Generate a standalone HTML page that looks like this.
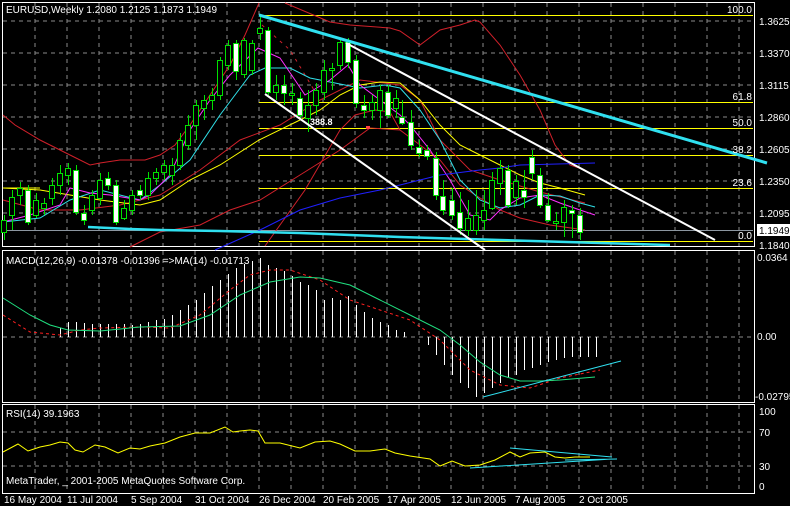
<!DOCTYPE html>
<html><head><meta charset="utf-8"><style>
html,body{margin:0;padding:0;background:#000;width:790px;height:506px;overflow:hidden}
svg{display:block}
text{font-family:"Liberation Sans",sans-serif;font-size:10px;fill:#fff}
</style></head><body>
<svg width="790" height="506" viewBox="0 0 790 506" xmlns="http://www.w3.org/2000/svg">
<rect width="790" height="506" fill="#000"/>
<g stroke="#8a8a8a" stroke-dasharray="4,4" stroke-width="1" shape-rendering="crispEdges">
<path d="M35 3V246M67 3V246M99 3V246M131 3V246M163 3V246M195 3V246M227 3V246M259 3V246M291 3V246M323 3V246M355 3V246M387 3V246M419 3V246M451 3V246M483 3V246M515 3V246M547 3V246M579 3V246M611 3V246M643 3V246M675 3V246M707 3V246M739 3V246"/>
<path d="M3 21H753M3 53H753M3 85H753M3 117H753M3 149H753M3 181H753M3 213H753"/>
<path d="M35 251V401M67 251V401M99 251V401M131 251V401M163 251V401M195 251V401M227 251V401M259 251V401M291 251V401M323 251V401M355 251V401M387 251V401M419 251V401M451 251V401M483 251V401M515 251V401M547 251V401M579 251V401M611 251V401M643 251V401M675 251V401M707 251V401M739 251V401"/>
<path d="M3 337H753"/>
<path d="M35 405V492M67 405V492M99 405V492M131 405V492M163 405V492M195 405V492M227 405V492M259 405V492M291 405V492M323 405V492M355 405V492M387 405V492M419 405V492M451 405V492M483 405V492M515 405V492M547 405V492M579 405V492M611 405V492M643 405V492M675 405V492M707 405V492M739 405V492"/>
<path d="M3 432H753M3 466H753"/>
</g>
<g fill="none" stroke="#fff" stroke-width="1" shape-rendering="crispEdges">
<rect x="2.5" y="2.5" width="752" height="244"/>
<rect x="2.5" y="250.5" width="752" height="152"/>
<rect x="2.5" y="404.5" width="752" height="89"/>
</g>
<path d="M3 230.5H753" stroke="#8c96a0" stroke-width="1"/>
<g stroke="#ffff00" stroke-width="1" shape-rendering="crispEdges">
<path d="M259 15.5H753M259 102.5H753M259 128.5H753M259 155.5H753M259 188.5H753M259 241.5H753"/>
<path d="M3 188H40"/>
</g>
<g fill="none" stroke-width="1">
<polyline stroke="#d0202a" points="3,115 15,125 40,140 70,155 90,165 100,163 120,160 145,160 160,155 175,145 190,125 210,95 230,65 245,35 259,3"/>
<polyline stroke="#d0202a" points="285,3 330,22 350,25 390,28 400,31 420,45 440,30 460,25 475,20 480,22 500,45 520,75 540,110 555,145 570,165 585,170"/>
<polyline stroke="#d0202a" points="130,247 160,232 200,225 230,210 260,200 300,175 340,150 370,128 400,130 420,145 440,160 460,185 480,198 500,210 520,218 550,225 585,230"/>
<polyline stroke="#d0202a" points="265,246 305,190 340,130 355,115 375,110 390,112 400,130"/>
<polyline stroke="#d0202a" points="3,200 40,210 80,210 120,205 160,195 200,170 240,140 280,125 320,100 360,80 400,85 420,100 440,140 470,170 500,180 540,192 585,203"/>
<polyline stroke="#d0202a" stroke-dasharray="3,5" points="262,25 290,50 320,100"/>
<polyline stroke="#ffff00" points="3,188 40,190 70,195 100,200 140,205 160,200 190,180 220,165 259,140 300,120 320,110 340,95 360,85 380,82 400,83 420,100 440,125 460,145 480,155 500,165 520,175 540,183 560,188 585,195"/>
<polyline stroke="#30e0e8" points="3,222 40,218 70,200 100,190 140,200 160,185 190,160 220,115 250,75 265,68 290,68 310,78 330,82 360,88 385,85 400,88 420,110 440,140 460,180 480,200 500,208 520,205 540,195 560,196 580,203 595,207"/>
<polyline stroke="#ff30ff" points="3,222 30,215 60,205 70,188 90,193 110,195 140,200 150,195 170,175 190,130 210,100 230,75 258,48 280,58 295,80 305,95 330,80 348,65 360,85 380,100 400,115 410,125 430,150 450,180 470,215 490,220 500,210 520,198 540,195 560,203 580,210 595,215"/>
<polyline stroke="#2020ff" points="215,250 260,230 300,210 340,198 380,190 400,185 440,175 480,170 500,168 520,165 595,163"/>
</g>
<g stroke="#00e000" stroke-width="1" shape-rendering="crispEdges" transform="translate(0.5,0)">
<path d="M4 215V240M12 190V230M20 182V205M28 185V225M36 193V218M44 198V215M52 178V205M60 165V195M68 163V185M76 165V215M84 205V225M92 190V215M100 173V205M108 172V190M116 180V225M124 200V220M132 190V215M140 185V200M148 172V200M156 168V185M164 160V180M172 158V185M180 133V170M188 115V150M196 100V140M204 95V120M212 88V110M220 57V100M228 40V70M236 40V80M244 38V78M252 40V75M260 15V40M268 27V95M276 75V100M284 75V105M292 83V105M300 92V120M308 90V132M316 83V115M324 60V100M332 63V90M340 38V70M348 38V68M356 55V108M364 95V118M372 95V120M380 85V128M388 85V118M396 90V118M402 100V125M411 110V150M419 140V157M427 145V160M436 152V200M443 180V215M452 188V220M460 192V235M468 200V236M476 190V235M484 190V230M492 172V210M500 160V195M508 165V208M516 175V205M524 170V208M532 150V180M540 168V208M548 193V222M556 212V230M564 200V237M572 205V238M580 208V240"/>
</g>
<g stroke="#00e000" stroke-width="1" shape-rendering="crispEdges">
<g fill="#000">
<rect x="1.5" y="220.5" width="5" height="12"/><rect x="9.5" y="197.5" width="5" height="18"/><rect x="17.5" y="188.5" width="5" height="7"/><rect x="33.5" y="200.5" width="5" height="15"/><rect x="41.5" y="203.5" width="5" height="5"/><rect x="49.5" y="185.5" width="5" height="13"/><rect x="57.5" y="173.5" width="5" height="12"/><rect x="65.5" y="168.5" width="5" height="7"/><rect x="89.5" y="195.5" width="5" height="15"/><rect x="97.5" y="180.5" width="5" height="18"/><rect x="121.5" y="208.5" width="5" height="10"/><rect x="129.5" y="195.5" width="5" height="15"/><rect x="145.5" y="178.5" width="5" height="17"/><rect x="153.5" y="172.5" width="5" height="6"/><rect x="161.5" y="165.5" width="5" height="7"/><rect x="169.5" y="165.5" width="5" height="10"/><rect x="177.5" y="140.5" width="5" height="25"/><rect x="185.5" y="125.5" width="5" height="20"/><rect x="193.5" y="105.5" width="5" height="20"/><rect x="201.5" y="100.5" width="5" height="8"/><rect x="209.5" y="95.5" width="5" height="5"/><rect x="217.5" y="60.5" width="5" height="35"/><rect x="225.5" y="45.5" width="5" height="20"/><rect x="241.5" y="40.5" width="5" height="34"/><rect x="249.5" y="43.5" width="5" height="27"/><rect x="257.5" y="28.5" width="5" height="5"/><rect x="273.5" y="85.5" width="5" height="7"/><rect x="289.5" y="93.5" width="5" height="2"/><rect x="305.5" y="105.5" width="5" height="13"/><rect x="313.5" y="90.5" width="5" height="15"/><rect x="321.5" y="70.5" width="5" height="22"/><rect x="329.5" y="68.5" width="5" height="2"/><rect x="337.5" y="42.5" width="5" height="23"/><rect x="369.5" y="102.5" width="5" height="8"/><rect x="377.5" y="90.5" width="5" height="20"/><rect x="393.5" y="98.5" width="5" height="10"/><rect x="465.5" y="218.5" width="5" height="12"/><rect x="473.5" y="215.5" width="5" height="15"/><rect x="481.5" y="210.5" width="5" height="10"/><rect x="489.5" y="180.5" width="5" height="28"/><rect x="497.5" y="168.5" width="5" height="15"/><rect x="513.5" y="181.5" width="5" height="16"/><rect x="553.5" y="221.5" width="5" height="2"/><rect x="561.5" y="207.5" width="5" height="15"/>
</g>
<g fill="#fff">
<rect x="25.5" y="190.5" width="5" height="32"/><rect x="73.5" y="170.5" width="5" height="42"/><rect x="81.5" y="213.5" width="5" height="7"/><rect x="105.5" y="178.5" width="5" height="7"/><rect x="113.5" y="185.5" width="5" height="37"/><rect x="137.5" y="190.5" width="5" height="5"/><rect x="233.5" y="43.5" width="5" height="28"/><rect x="265.5" y="30.5" width="5" height="62"/><rect x="281.5" y="85.5" width="5" height="8"/><rect x="297.5" y="98.5" width="5" height="17"/><rect x="345.5" y="42.5" width="5" height="20"/><rect x="353.5" y="60.5" width="5" height="43"/><rect x="361.5" y="105.5" width="5" height="5"/><rect x="385.5" y="92.5" width="5" height="23"/><rect x="399.5" y="117.5" width="5" height="6"/><rect x="408.5" y="122.5" width="5" height="23"/><rect x="416.5" y="147.5" width="5" height="6"/><rect x="424.5" y="150.5" width="5" height="6"/><rect x="433.5" y="158.5" width="5" height="37"/><rect x="440.5" y="196.5" width="5" height="14"/><rect x="449.5" y="200.5" width="5" height="15"/><rect x="457.5" y="212.5" width="5" height="16"/><rect x="505.5" y="170.5" width="5" height="35"/><rect x="521.5" y="190.5" width="5" height="7"/><rect x="529.5" y="157.5" width="5" height="16"/><rect x="537.5" y="175.5" width="5" height="30"/><rect x="545.5" y="205.5" width="5" height="15"/><rect x="569.5" y="210.5" width="5" height="3"/><rect x="577.5" y="215.5" width="5" height="17"/>
</g>
</g>
<path d="M259 15L767 163" stroke="#30e0f0" stroke-width="3"/>
<polyline fill="none" stroke="#30e0f0" stroke-width="2.5" points="88,227 130,229 160,230 220,231 259,232 300,233 400,237 500,240 600,243 670,245"/>
<path d="M346 43L715 240" stroke="#fff" stroke-width="2"/>
<path d="M265 94L485 250" stroke="#fff" stroke-width="2"/>
<text x="310" y="125" style="font-size:9px;font-weight:bold">388.8</text>
<rect x="366" y="126" width="4" height="3" fill="#ff4040"/>
<text x="6" y="13">EURUSD,Weekly  1.2080 1.2125 1.1873 1.1949</text>
<g text-anchor="end">
<text x="752" y="13">100.0</text><text x="752" y="100">61.8</text><text x="752" y="126">50.0</text><text x="752" y="153">38.2</text><text x="752" y="186">23.6</text><text x="752" y="239">0.0</text>
</g>
<g>
<text x="759" y="25">1.3625</text><text x="759" y="57">1.3370</text><text x="759" y="89">1.3115</text><text x="759" y="121">1.2860</text><text x="759" y="153">1.2605</text><text x="759" y="185">1.2350</text><text x="759" y="217">1.2095</text><text x="759" y="249">1.1840</text>
</g>
<rect x="757" y="224" width="33" height="12" fill="#fff"/>
<text x="759" y="234" style="fill:#000">1.1949</text>
<g stroke="#fff" stroke-width="1" shape-rendering="crispEdges" transform="translate(0.5,0)">
<path d="M60 337V328M68 337V322M76 337V322M84 337V323M92 337V324M100 337V324M108 337V324M116 337V324M124 337V324M132 337V325M140 337V324M148 337V322M156 337V320M164 337V319M172 337V315M180 337V310M188 337V305M196 337V300M204 337V293M212 337V286M220 337V280M228 337V274M236 337V268M244 337V264M252 337V261M260 337V258M268 337V265M276 337V268M284 337V271M292 337V276M300 337V282M308 337V285M316 337V290M324 337V300M332 337V298M340 337V300M348 337V296M356 337V305M364 337V312M372 337V318M380 337V322M388 337V325M396 337V330M404 337V332M428 337V345M436 337V355M444 337V365M452 337V375M460 337V383M468 337V388M476 337V397M484 337V393M492 337V388M500 337V383M508 337V378M516 337V375M524 337V370M532 337V368M540 337V365M548 337V362M556 337V360M564 337V358M572 337V357M580 337V357M588 337V357M596 337V357"/>
</g>
<polyline fill="none" stroke="#ff2020" stroke-dasharray="3,3" points="3,315 30,332 60,335 80,330 100,328 140,327 170,328 200,315 230,290 250,275 270,270 290,270 320,280 350,300 380,310 410,320 440,340 470,370 500,385 530,388 560,378 600,370"/>
<polyline fill="none" stroke="#20e080" points="3,298 30,315 50,325 68,330 100,331 140,327 180,326 210,315 240,295 270,282 300,277 320,278 350,285 380,300 410,315 440,330 460,345 480,362 500,375 520,381 540,381 560,380 595,377"/>
<path d="M483 397L621 361" stroke="#30e0f0" stroke-width="1"/>
<text x="6" y="264">MACD(12,26,9) -0.01378 -0.01396  =&gt;MA(14) -0.01713</text>
<text x="757" y="261">0.0364</text><text x="757" y="340">0.00</text><text x="755" y="400">-0.02795</text>
<polyline fill="none" stroke="#ffff00" points="3,452 18,444 28,451 40,447 50,445 60,442 68,443 75,450 83,452 95,445 105,447 118,453 130,448 140,449 150,446 165,443 180,437 195,433 210,433 225,427 233,432 240,431 250,430 258,431 265,443 280,443 300,448 315,442 330,441 340,444 355,451 370,451 385,449 395,453 410,456 430,459 440,466 452,461 465,466 480,465 495,460 510,452 520,457 530,453 545,452 555,457 565,458 575,457 590,457"/>
<g stroke="#30e0f0" stroke-width="1"><path d="M470 468L612 459M510 448L612 457M565 460L617 459"/></g>
<text x="6" y="417">RSI(14) 39.1963</text>
<text x="6" y="484">MetaTrader, _ 2001-2005 MetaQuotes Software Corp.</text>
<text x="759" y="415">100</text><text x="759" y="436">70</text><text x="759" y="470">30</text><text x="759" y="490">0</text>
<g>
<text x="4" y="503">16 May 2004</text><text x="67" y="503">11 Jul 2004</text><text x="131" y="503">5 Sep 2004</text><text x="195" y="503">31 Oct 2004</text><text x="259" y="503">26 Dec 2004</text><text x="323" y="503">20 Feb 2005</text><text x="387" y="503">17 Apr 2005</text><text x="451" y="503">12 Jun 2005</text><text x="515" y="503">7 Aug 2005</text><text x="579" y="503">2 Oct 2005</text>
</g>
</svg>
</body></html>
